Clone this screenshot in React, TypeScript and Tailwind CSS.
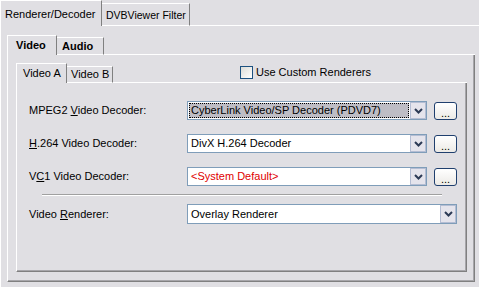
import { ReactNode } from "react";

const Chevron = () => (
  <svg width="9" height="6" viewBox="0 0 9 6">
    <path d="M1 1 L4.5 4.5 L8 1" fill="none" stroke="#2c3a55" strokeWidth="2" />
  </svg>
);

function Combo({ w, h = 19, children, selected }: { w: string; h?: number; children: ReactNode; selected?: boolean }) {
  return (
    <div className={`flex ${w} ${h === 20 ? "h-[20px]" : "h-[19px]"} border border-[#7f9db9] bg-white`}>
      <div className="flex-1 p-[1px]">
        {selected ? (
          <div className="flex h-full items-center border border-dotted border-black bg-[#bebdc5] pl-[1px] text-black">
            {children}
          </div>
        ) : (
          <div className="flex h-full items-center pl-[2px]">{children}</div>
        )}
      </div>
      <div className="flex w-[16px] items-center justify-center border border-[#b4bdd3] bg-[#e5e4ec]">
        <Chevron />
      </div>
    </div>
  );
}

const Dots = () => (
  <div className="flex h-[18px] w-[23px] items-end justify-center rounded-[3px] border border-[#1f3f6e] bg-[linear-gradient(#ffffff,#eceae6)] pb-[2px] text-[11px] leading-[8px]">
    ...
  </div>
);

function Row({ label, children }: { label: ReactNode; children: ReactNode }) {
  return (
    <div className="flex items-center">
      <div className="w-[158px]">{label}</div>
      {children}
    </div>
  );
}

export default function App() {
  return (
    <div className="flex h-[287px] w-[479px] flex-col overflow-hidden bg-[#e0dfe3] font-['Liberation_Sans',Arial,sans-serif] text-[11px] leading-[13px] text-black">
      {/* outer tabs */}
      <div className="flex h-[26px] shrink-0 items-end">
        <div className="h-[26px] w-[102px] border-l border-t border-r border-white border-r-[#808080] pl-[4px] pt-[7px]">
          Renderer/Decoder
        </div>
        <div className="h-[23px] w-[88px] border-t border-r border-b border-white border-r-[#808080] pl-[4px] pt-[5px] text-[10.5px]">
          DVBViewer Filter
        </div>
        <div className="h-[26px] flex-1 border-b border-white" />
      </div>

      <div className="flex-1 border-l border-white pl-[6px] pt-[9px]">
        {/* Video / Audio tabs */}
        <div className="flex h-[20px] w-[468px] items-end font-bold">
          <div className="h-[20px] w-[50px] border-l border-t border-r border-white border-r-[#808080] pl-[8px] pt-[3px]">
            Video
          </div>
          <div className="h-[18px] w-[47px] border-t border-r border-b border-white border-r-[#808080] pl-[5px] pt-[2px]">
            Audio
          </div>
          <div className="h-[20px] flex-1 border-b border-white" />
        </div>

        <div className="h-[227px] w-[468px] border-l border-r border-b border-white border-r-[#808080] border-b-[#808080] pl-[8px] pt-[8px] shadow-[inset_-1px_-1px_0_#a7a6aa]">
          {/* Video A / Video B tabs */}
          <div className="flex h-[20px] w-[451px] items-end">
            <div className="h-[20px] w-[51px] border-l border-t border-r border-white border-r-[#808080] pl-[6px] pt-[3px]">
              Video A
            </div>
            <div className="h-[17px] w-[46px] border-t border-r border-b border-white border-r-[#808080] pl-[4px] pt-[1px]">
              Video B
            </div>
            <div className="flex h-[20px] flex-1 items-start border-b border-white pl-[127px] pt-[3px]">
              <div className="flex items-center gap-[3px]">
                <div className="h-[13px] w-[13px] border border-[#1c5180] bg-[linear-gradient(135deg,#dcdcd7,#ffffff)]" />
                <span>Use Custom Renderers</span>
              </div>
            </div>
          </div>

          <div className="h-[189px] w-[451px] border-l border-r border-b border-white border-r-[#808080] border-b-[#808080] pl-[12px] pt-[18px] shadow-[inset_-1px_-1px_0_#a7a6aa]">
            <div className="flex flex-col gap-[14px]">
              <Row label={<>MPEG2 <span className="underline">V</span>ideo Decoder:</>}>
                <Combo w="w-[240px]" selected>
                  CyberLink Video/SP Decoder (PDVD7)
                </Combo>
                <div className="ml-[7px]"><Dots /></div>
              </Row>
              <Row label={<><span className="underline">H</span>.264 Video Decoder:</>}>
                <Combo w="w-[240px]">DivX H.264 Decoder</Combo>
                <div className="ml-[7px]"><Dots /></div>
              </Row>
              <Row label={<>V<span className="underline">C</span>1 Video Decoder:</>}>
                <Combo w="w-[240px]">
                  <span className="text-[#e00000]">&lt;System Default&gt;</span>
                </Combo>
                <div className="ml-[7px]"><Dots /></div>
              </Row>
            </div>

            <div className="ml-[13px] mt-[8px] h-[2px] w-[400px] border-t border-[#a0a0a0] border-b-white border-b" />

            <div className="mt-[8px]">
              <Row label={<>Video <span className="underline">R</span>enderer:</>}>
                <Combo w="w-[270px]" h={20}>Overlay Renderer</Combo>
              </Row>
            </div>
          </div>
        </div>
      </div>
    </div>
  );
}
